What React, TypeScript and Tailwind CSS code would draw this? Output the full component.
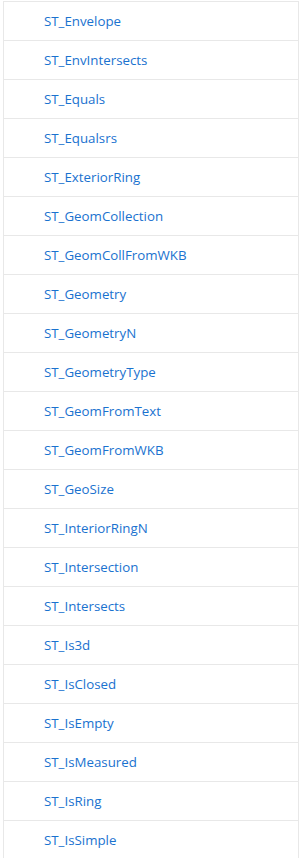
const items = [
  "ST_Envelope",
  "ST_EnvIntersects",
  "ST_Equals",
  "ST_Equalsrs",
  "ST_ExteriorRing",
  "ST_GeomCollection",
  "ST_GeomCollFromWKB",
  "ST_Geometry",
  "ST_GeometryN",
  "ST_GeometryType",
  "ST_GeomFromText",
  "ST_GeomFromWKB",
  "ST_GeoSize",
  "ST_InteriorRingN",
  "ST_Intersection",
  "ST_Intersects",
  "ST_Is3d",
  "ST_IsClosed",
  "ST_IsEmpty",
  "ST_IsMeasured",
  "ST_IsRing",
  "ST_IsSimple",
];

export default function App() {
  return (
    <div className="min-h-screen bg-white pt-[1px] pl-[3px]">
      <ul className="w-[296px] border-x border-[#e8e8e8] font-['Open_Sans',sans-serif]">
        {items.map((name) => (
          <li
            key={name}
            className="flex h-[39px] items-center border-t border-[#e8e8e8] pl-[40px] pt-[2px] text-[13.3px] text-[#1a72cf]"
          >
            <a href="#" className="hover:underline">
              {name}
            </a>
          </li>
        ))}
      </ul>
    </div>
  );
}
